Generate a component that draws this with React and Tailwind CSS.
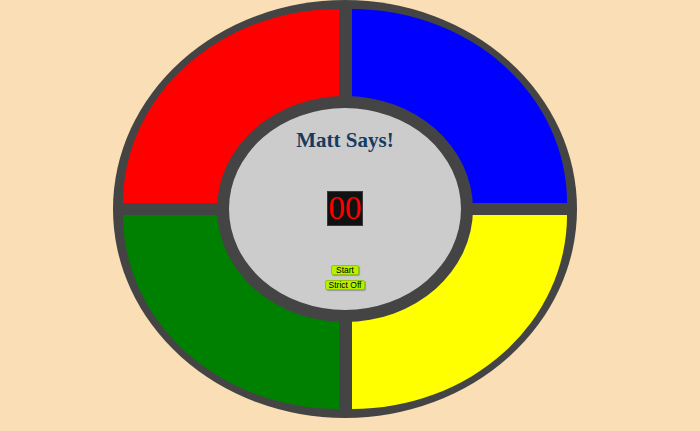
import React from 'react';

const App = () => {
    return (
        <div className="w-[700px] h-[431px] bg-[#f9deb6] overflow-hidden">
            {/* Game board */}
            <div className="relative ml-[113px] w-[464px] h-[418px] rounded-[50%] bg-[#444444] px-[10px] py-[9px] grid grid-cols-2 grid-rows-2 gap-x-[13px] gap-y-[12px]">
                <div className="bg-[#ff0000] rounded-tl-[100%]" />
                <div className="bg-[#0000ff] rounded-tr-[100%]" />
                <div className="bg-[#008000] rounded-bl-[100%]" />
                <div className="bg-[#ffff00] rounded-br-[100%]" />

                {/* Center console */}
                <div className="absolute left-[104px] top-[96px] w-[256px] h-[226px] rounded-[50%] border-[12px] border-[#444444] bg-[#cccccc] flex flex-col items-center pt-[22px]">
                    <h1 className="text-[21px] leading-none font-bold text-[#163b5e] font-['Liberation_Serif','Times_New_Roman',serif]">
                        Matt Says!
                    </h1>
                    <div className="mt-[40px] w-[36px] h-[35px] bg-[#111111] border border-[#3a3a3a] flex items-center justify-center overflow-hidden">
                        <span className="text-[33px] leading-none text-[#ff0000] font-['Liberation_Serif','Times_New_Roman',serif]">00</span>
                    </div>
                    <button className="mt-[39px] h-[10px] px-[4px] bg-[#b6f200] border border-[#95c800] rounded-[2px] shadow-[1px_1px_1px_rgba(0,0,0,0.25)] text-[8.5px] leading-none text-black font-['Liberation_Sans',sans-serif] flex items-center">
                        Start
                    </button>
                    <button className="mt-[5px] h-[10px] px-[3px] bg-[#b6f200] border border-[#95c800] rounded-[2px] shadow-[1px_1px_1px_rgba(0,0,0,0.25)] text-[8.5px] leading-none text-black font-['Liberation_Sans',sans-serif] flex items-center">
                        Strict Off
                    </button>
                </div>
            </div>
        </div>
    );
};

export default App;
